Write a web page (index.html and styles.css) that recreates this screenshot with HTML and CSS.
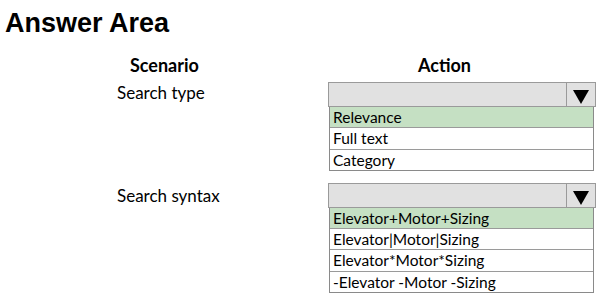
FILE: index.html
```html
<!DOCTYPE html>
<html lang="en">

<head>
    <meta charset="UTF-8">
    <meta name="viewport" content="width=device-width, initial-scale=1.0">
    <title>Answer Area</title>
    <link rel="stylesheet" href="styles.css">
</head>

<body>

    <h1 class="titulo">Answer Area</h1>

    <section class="area">
        <div class="cabecalho cab-cenario">Scenario</div>
        <div class="cabecalho cab-acao">Action</div>

        <!-- Primeira pergunta -->
        <div class="cenario">Search type</div>
        <div class="lista">
            <div class="seletor">
                <span class="vazio"></span>
                <span class="seta"></span>
            </div>
            <ul class="opcoes">
                <li class="certa">Relevance</li>
                <li>Full text</li>
                <li>Category</li>
            </ul>
        </div>

        <!-- Segunda pergunta -->
        <div class="cenario cenario-baixo">Search syntax</div>
        <div class="lista">
            <div class="seletor">
                <span class="vazio"></span>
                <span class="seta"></span>
            </div>
            <ul class="opcoes">
                <li class="certa">Elevator+Motor+Sizing</li>
                <li>Elevator|Motor|Sizing</li>
                <li>Elevator*Motor*Sizing</li>
                <li>-Elevator -Motor -Sizing</li>
            </ul>
        </div>
    </section>

</body>

</html>
```

FILE: styles.css
```css
body {
    margin: 0;
    background-color: #fff;
    color: #000;
    font-family: Lato, "Open Sans", sans-serif;
}

.titulo {
    margin: 0;
    padding: 7px 0 0 5px;
    font-family: "Liberation Sans", Arial, sans-serif;
    font-size: 27px;
    line-height: 32px;
    font-weight: bold;
}

.area {
    display: grid;
    /* coluna dos cenarios e coluna das listas */
    grid-template-columns: 211px 268px;
    padding-left: 117px;
    margin-top: 15px;
}

.cabecalho {
    font-size: 18px;
    font-weight: bold;
    line-height: 22px;
}

.cab-cenario {
    padding-left: 13px;
}

.cab-acao {
    padding-left: 90px;
}

.cenario {
    font-size: 17px;
    line-height: 22px;
    padding-top: 6px;
}

/* o segundo rotulo fica mais abaixo na imagem */
.cenario-baixo {
    padding-top: 8px;
}

.lista {
    margin-top: 6px;
    margin-bottom: 6px;
}

.seletor {
    display: flex;
    height: 23px;
    border: 1px solid #9a9a9a;
    background-color: #e1e1e1;
}

.vazio {
    flex: 1;
    border-right: 1px solid #9a9a9a;
}

.seta {
    width: 28px;
    display: flex;
    justify-content: center;
    align-items: center;
}

/* triangulo preto feito com bordas */
.seta::before {
    content: "";
    width: 0;
    height: 0;
    margin-top: 5px;
    border-left: 8px solid transparent;
    border-right: 8px solid transparent;
    border-top: 14px solid #000;
}

.opcoes {
    list-style: none;
    margin: 0 2px 0 1px;
    padding: 0;
    border: 1px solid #8a8a8a;
    border-top: none;
}

.opcoes li {
    height: 20.25px;
    padding-left: 3px;
    font-size: 15.5px;
    line-height: 21px;
    border-top: 1px solid #9a9a9a;
}

.opcoes li:first-child {
    border-top: none;
}

.opcoes .certa {
    background-color: #c5e0c3;
}
```
